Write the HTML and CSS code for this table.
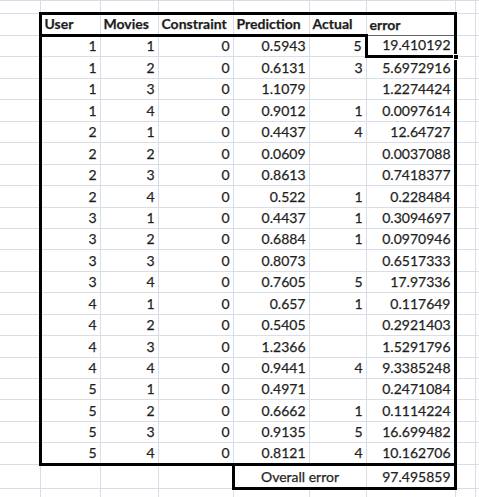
FILE: index.html
```html
<!DOCTYPE html>
<html>
<head>
<meta charset="utf-8">
<link rel="stylesheet" href="styles.css">
</head>
<body>
<table class="sheet">
  <colgroup>
    <col class="ca"><col class="cb"><col class="cc"><col class="cd"><col class="ce"><col class="cf"><col class="cg"><col class="ch"><col class="ci">
  </colgroup>
  <tr class="r0"><td class="first"></td><td></td><td></td><td></td><td></td><td></td><td></td><td></td><td></td></tr>
  <tr class="rh">
    <td class="first"></td>
    <td class="h bt bb bl">User</td>
    <td class="h bt bb">Movies</td>
    <td class="h bt bb">Constraint</td>
    <td class="h bt bb">Prediction</td>
    <td class="h bt bb">Actual</td>
    <td class="h bt br selt">error</td>
    <td></td><td></td>
  </tr>
  <tr class="rd"><td class="first"></td><td class="n bl">1</td><td class="n">1</td><td class="n">0</td><td class="n">0.5943</td><td class="n">5</td><td class="n sel">19.410192<span class="handle"></span></td><td></td><td></td></tr>
  <tr class="rd"><td class="first"></td><td class="n bl">1</td><td class="n">2</td><td class="n">0</td><td class="n">0.6131</td><td class="n">3</td><td class="n br">5.6972916</td><td></td><td></td></tr>
  <tr class="rd"><td class="first"></td><td class="n bl">1</td><td class="n">3</td><td class="n">0</td><td class="n">1.1079</td><td class="n"></td><td class="n br">1.2274424</td><td></td><td></td></tr>
  <tr class="rd"><td class="first"></td><td class="n bl">1</td><td class="n">4</td><td class="n">0</td><td class="n">0.9012</td><td class="n">1</td><td class="n br">0.0097614</td><td></td><td></td></tr>
  <tr class="rd"><td class="first"></td><td class="n bl">2</td><td class="n">1</td><td class="n">0</td><td class="n">0.4437</td><td class="n">4</td><td class="n br">12.64727</td><td></td><td></td></tr>
  <tr class="rd"><td class="first"></td><td class="n bl">2</td><td class="n">2</td><td class="n">0</td><td class="n">0.0609</td><td class="n"></td><td class="n br">0.0037088</td><td></td><td></td></tr>
  <tr class="rd"><td class="first"></td><td class="n bl">2</td><td class="n">3</td><td class="n">0</td><td class="n">0.8613</td><td class="n"></td><td class="n br">0.7418377</td><td></td><td></td></tr>
  <tr class="rd"><td class="first"></td><td class="n bl">2</td><td class="n">4</td><td class="n">0</td><td class="n">0.522</td><td class="n">1</td><td class="n br">0.228484</td><td></td><td></td></tr>
  <tr class="rd"><td class="first"></td><td class="n bl">3</td><td class="n">1</td><td class="n">0</td><td class="n">0.4437</td><td class="n">1</td><td class="n br">0.3094697</td><td></td><td></td></tr>
  <tr class="rd"><td class="first"></td><td class="n bl">3</td><td class="n">2</td><td class="n">0</td><td class="n">0.6884</td><td class="n">1</td><td class="n br">0.0970946</td><td></td><td></td></tr>
  <tr class="rd"><td class="first"></td><td class="n bl">3</td><td class="n">3</td><td class="n">0</td><td class="n">0.8073</td><td class="n"></td><td class="n br">0.6517333</td><td></td><td></td></tr>
  <tr class="rd"><td class="first"></td><td class="n bl">3</td><td class="n">4</td><td class="n">0</td><td class="n">0.7605</td><td class="n">5</td><td class="n br">17.97336</td><td></td><td></td></tr>
  <tr class="rd"><td class="first"></td><td class="n bl">4</td><td class="n">1</td><td class="n">0</td><td class="n">0.657</td><td class="n">1</td><td class="n br">0.117649</td><td></td><td></td></tr>
  <tr class="rd"><td class="first"></td><td class="n bl">4</td><td class="n">2</td><td class="n">0</td><td class="n">0.5405</td><td class="n"></td><td class="n br">0.2921403</td><td></td><td></td></tr>
  <tr class="rd"><td class="first"></td><td class="n bl">4</td><td class="n">3</td><td class="n">0</td><td class="n">1.2366</td><td class="n"></td><td class="n br">1.5291796</td><td></td><td></td></tr>
  <tr class="rd"><td class="first"></td><td class="n bl">4</td><td class="n">4</td><td class="n">0</td><td class="n">0.9441</td><td class="n">4</td><td class="n br">9.3385248</td><td></td><td></td></tr>
  <tr class="rd"><td class="first"></td><td class="n bl">5</td><td class="n">1</td><td class="n">0</td><td class="n">0.4971</td><td class="n"></td><td class="n br">0.2471084</td><td></td><td></td></tr>
  <tr class="rd"><td class="first"></td><td class="n bl">5</td><td class="n">2</td><td class="n">0</td><td class="n">0.6662</td><td class="n">1</td><td class="n br">0.1114224</td><td></td><td></td></tr>
  <tr class="rd"><td class="first"></td><td class="n bl">5</td><td class="n">3</td><td class="n">0</td><td class="n">0.9135</td><td class="n">5</td><td class="n br">16.699482</td><td></td><td></td></tr>
  <tr class="rd"><td class="first"></td><td class="n bl bb">5</td><td class="n bb">4</td><td class="n bb">0</td><td class="n bb">0.8121</td><td class="n bb">4</td><td class="n br bb">10.162706</td><td></td><td></td></tr>
  <tr class="ro">
    <td class="first"></td><td></td><td></td><td></td>
    <td class="c bl bt bb" colspan="2">Overall error</td>
    <td class="n br bt bb">97.495859</td>
    <td></td><td></td>
  </tr>
  <tr class="rl"><td class="first"></td><td></td><td></td><td></td><td></td><td></td><td></td><td></td><td></td></tr>
</table>
</body>
</html>
```

FILE: styles.css
```css
html, body {
  margin: 0;
  padding: 0;
  background: #ffffff;
  overflow: hidden;
}

.sheet {
  border-collapse: collapse;
  table-layout: fixed;
  width: 479px;
  font-family: Lato, "Open Sans", sans-serif;
  font-size: 14px;
  color: #1a1a1a;
  -webkit-text-stroke: 0.25px #333;
}

.ca { width: 40px; }
.cb { width: 60px; }
.cc { width: 58px; }
.cd { width: 75px; }
.ce { width: 76px; }
.cf { width: 57px; }
.cg { width: 89px; }
.ch { width: 20px; }
.ci { width: 4px; }

.sheet td {
  border: 1px solid #d8dde7;
  padding: 0 3px 2px 3px;
  vertical-align: bottom;
  line-height: 16px;
  white-space: nowrap;
  overflow: visible;
}

.sheet td.first { border-left: none; }

.r0 { height: 13px; }
.rh { height: 22px; }
.rd { height: 21.45px; }
.ro { height: 24px; }
.rl { height: 20px; }

.h { font-weight: 700; text-align: left; }
.n { text-align: right; }
.c { text-align: center; }

.sheet td.bt { border-top: 3px solid #000; }
.sheet td.bb { border-bottom: 3px solid #000; }
.sheet td.bl { border-left: 3px solid #000; }
.sheet td.br { border-right: 3px solid #000; }

.sheet td.selt { border-bottom: 1px solid #666; }

.sheet td.sel {
  position: relative;
  border-left: 3px solid #000;
  border-right: 3px solid #000;
  border-bottom: 3px solid #000;
}

.handle {
  position: absolute;
  right: -5px;
  bottom: -5px;
  width: 4px;
  height: 4px;
  background: #000;
  border: 1px solid #fff;
}
```
